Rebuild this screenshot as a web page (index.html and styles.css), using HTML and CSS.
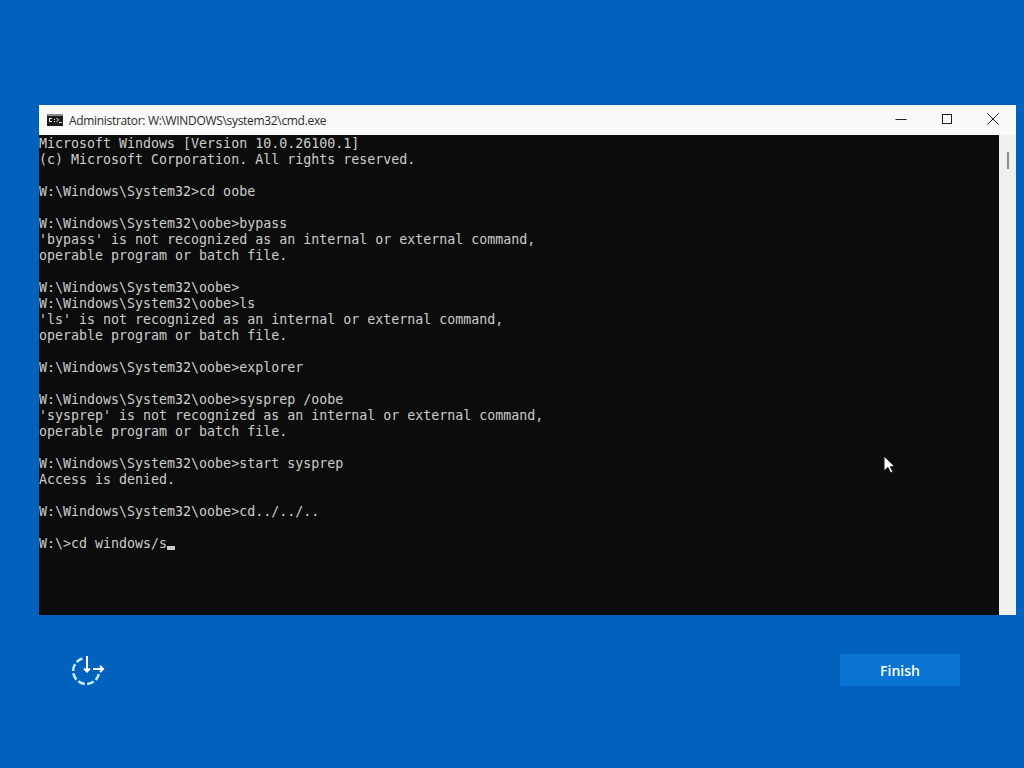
FILE: index.html
```html
<!DOCTYPE html>
<html lang="en">
<head>
<meta charset="utf-8">
<title>Administrator: W:\WINDOWS\system32\cmd.exe</title>
<link rel="stylesheet" href="styles.css">
</head>
<body>
<main class="page">
  <section class="window">
    <header class="titlebar">
      <svg class="app-icon" width="16" height="12" viewBox="0 0 16 12"><rect width="16" height="12" fill="#1c1c1c"/><rect x="0" y="0" width="16" height="2" fill="#8a8a8a"/><path d="M2 4h3v1H3v2h2v1H2zM7 5h1v1H7zM7 7h1v1H7zM9 4h1l1 1 1 1-2 2H9l2-2z" fill="#eee"/><rect x="12" y="8" width="3" height="1" fill="#ddd"/></svg>
      <span class="title">Administrator: W:\WINDOWS\system32\cmd.exe</span>
      <div class="controls">
        <span class="ctl"><svg width="12" height="12" viewBox="0 0 12 12"><path d="M0.5 6.500h11" stroke="#222" stroke-width="1"/></svg></span>
        <span class="ctl"><svg width="12" height="12" viewBox="0 0 12 12"><rect x="1.5" y="1.5" width="9" height="9" fill="none" stroke="#222" stroke-width="1"/></svg></span>
        <span class="ctl"><svg width="12" height="12" viewBox="0 0 12 12"><path d="M.4.4l11.200 11.200M11.600.4L.4 11.600" stroke="#222" stroke-width="1"/></svg></span>
      </div>
    </header>
    <div class="client">
      <pre class="console">Microsoft Windows [Version 10.0.26100.1]
(c) Microsoft Corporation. All rights reserved.

W:\Windows\System32&gt;cd oobe

W:\Windows\System32\oobe&gt;bypass
'bypass' is not recognized as an internal or external command,
operable program or batch file.

W:\Windows\System32\oobe&gt;
W:\Windows\System32\oobe&gt;ls
'ls' is not recognized as an internal or external command,
operable program or batch file.

W:\Windows\System32\oobe&gt;explorer

W:\Windows\System32\oobe&gt;sysprep /oobe
'sysprep' is not recognized as an internal or external command,
operable program or batch file.

W:\Windows\System32\oobe&gt;start sysprep
Access is denied.

W:\Windows\System32\oobe&gt;cd../../..

W:\&gt;cd windows/s<span class="caret"></span></pre>
      <div class="scrollbar"><span class="thumb"></span></div>
    </div>
  </section>
  <footer class="footer">
    <svg class="access" width="36" height="32" viewBox="0 0 36 32" fill="none" stroke="#fff">
      <path d="M12.500 4.500A13 13 0 1 0 28.800 20" stroke-dasharray="7 2.500" stroke="#c4ecff" stroke-width="2.600"/>
      <path d="M17 2v15.500M14 14.500l3 3 3-3" stroke-width="2"/>
      <path d="M23 15h10M30 12l3 3-3 3" stroke-width="2"/>
    </svg>
    <button class="finish" type="button">Finish</button>
  </footer>
</main>
<svg class="pointer" width="13" height="19" viewBox="0 0 13 19"><path d="M1 1v15l4-3.500 2.600 5.500 2.400-1-2.600-5.300H12z" fill="#fff" stroke="#111" stroke-width="1"/></svg>
</body>
</html>
```
FILE: styles.css
```css
html, body {
  margin: 0;
  height: 100%;
}
body {
  background: #0062bd;
  overflow: hidden;
  position: relative;
}
.page {
  display: flex;
  flex-direction: column;
  padding: 105px 8px 0 39px;
}
.window {
  display: flex;
  flex-direction: column;
  width: 977px;
  height: 510px;
  background: #f4f4f4;
}
.titlebar {
  display: flex;
  align-items: center;
  height: 30px;
  padding-left: 8px;
  flex: none;
  background: #f9f9f9;
}
.app-icon {
  flex: none;
}
.title {
  margin-left: 6px;
  font: 12px "Open Sans", "Liberation Sans", sans-serif;
  letter-spacing: -0.32px;
  color: #2c2c2c;
}
.controls {
  display: flex;
  margin-left: auto;
  margin-top: -2px;
}
.ctl {
  display: flex;
  align-items: center;
  justify-content: center;
  width: 46px;
  height: 30px;
}
.client {
  display: flex;
  flex: 1;
  min-height: 0;
}
.console {
  flex: 1;
  margin: 0;
  padding-top: 1px;
  background: #0c0c0c;
  color: #cccccc;
  font: 13.3px/16px "DejaVu Sans Mono", monospace;
  white-space: pre;
  overflow: hidden;
  border-bottom: 1px solid #000;
}
.caret {
  display: inline-block;
  width: 8px;
  height: 4px;
  background: #cccccc;
  vertical-align: -2px;
}
.scrollbar {
  display: flex;
  justify-content: center;
  width: 17px;
  flex: none;
  background: #f0f0f0;
}
.thumb {
  width: 2px;
  height: 17px;
  margin-top: 17px;
  background: #8c8c8c;
}
.footer {
  display: flex;
  align-items: center;
  justify-content: space-between;
  width: 890px;
  margin: 39px 0 0 31px;
  height: 32px;
}
.access {
  flex: none;
}
.finish {
  width: 120px;
  height: 32px;
  border: 0;
  padding: 0;
  background: #0a74d4;
  color: #ffffff;
  font: 600 14px "Open Sans", "Liberation Sans", sans-serif;
}
.pointer {
  position: absolute;
  left: 883px;
  top: 455px;
}
```
